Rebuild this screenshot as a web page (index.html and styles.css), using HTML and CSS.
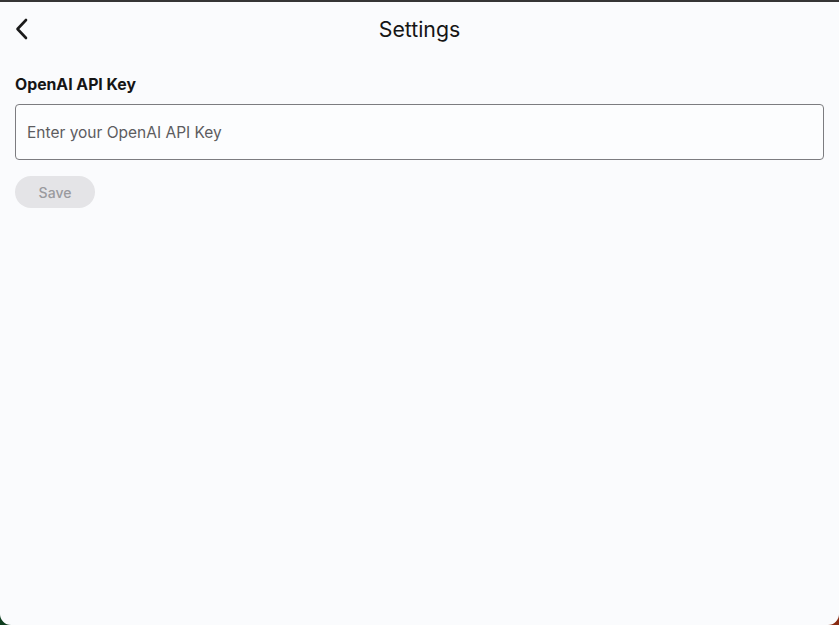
FILE: index.html
```html
<!DOCTYPE html>
<html lang="en">
<head>
<meta charset="utf-8">
<title>Settings</title>
<link rel="stylesheet" href="styles.css">
</head>
<body>
<div class="window">
  <header class="topbar">
    <button class="back" aria-label="Back">
      <svg width="14" height="22" viewBox="0 0 14 22" fill="none" stroke="#1a1a1a" stroke-width="2.6" stroke-linecap="round" stroke-linejoin="round"><path d="M11 2 L2.5 11 L11 20"/></svg>
    </button>
    <h1 class="title">Settings</h1>
    <span class="spacer"></span>
  </header>
  <main class="content">
    <label class="label" for="key">OpenAI API Key</label>
    <input id="key" class="input" type="text" placeholder="Enter your OpenAI API Key">
    <button class="save" disabled>Save</button>
  </main>
</div>
</body>
</html>
```
FILE: styles.css
```css
html, body {
  margin: 0;
  padding: 0;
  height: 100%;
}
body {
  background:
    linear-gradient(#353535, #353535) top left / 100% 2px no-repeat,
    linear-gradient(90deg, #0d3d1e 0%, #2a2a2a 50%, #8a2a10 100%);
  font-family: Inter, "Noto Sans", sans-serif;
  overflow: hidden;
}
.window {
  margin-top: 2px;
  height: 623px;
  background: #fafbfd;
  border-radius: 0 0 11px 11px;
  box-sizing: border-box;
  display: flex;
  flex-direction: column;
}
.topbar {
  display: flex;
  align-items: center;
  height: 54px;
  padding: 0 15px;
}
.back {
  border: 0;
  background: none;
  padding: 0;
  width: 40px;
  display: flex;
  align-items: center;
  cursor: pointer;
}
.title {
  flex: 1;
  margin: 0;
  text-align: center;
  font-size: 21.3px;
  font-weight: 400;
  color: #151515;
}
.spacer {
  width: 40px;
}
.content {
  padding: 19px 15px 0;
  display: flex;
  flex-direction: column;
  align-items: flex-start;
}
.label {
  font-size: 15.8px;
  font-weight: 700;
  color: #151515;
  line-height: 19px;
}
.input {
  margin-top: 10px;
  width: 100%;
  box-sizing: border-box;
  height: 56px;
  border: 1px solid #7c7c80;
  border-radius: 4px;
  background: #fcfdfe;
  padding: 0 11px;
  font-family: Inter, "Noto Sans", sans-serif;
  font-size: 15.5px;
  color: #151515;
  outline: none;
}
.input::placeholder {
  color: #5c5c60;
}
.save {
  margin-top: 16px;
  width: 80px;
  height: 32px;
  border: 0;
  border-radius: 16px;
  background: #e4e4e7;
  color: #9a9a9e;
  font-family: Inter, "Noto Sans", sans-serif;
  font-size: 14px;
  font-weight: 500;
}
```
